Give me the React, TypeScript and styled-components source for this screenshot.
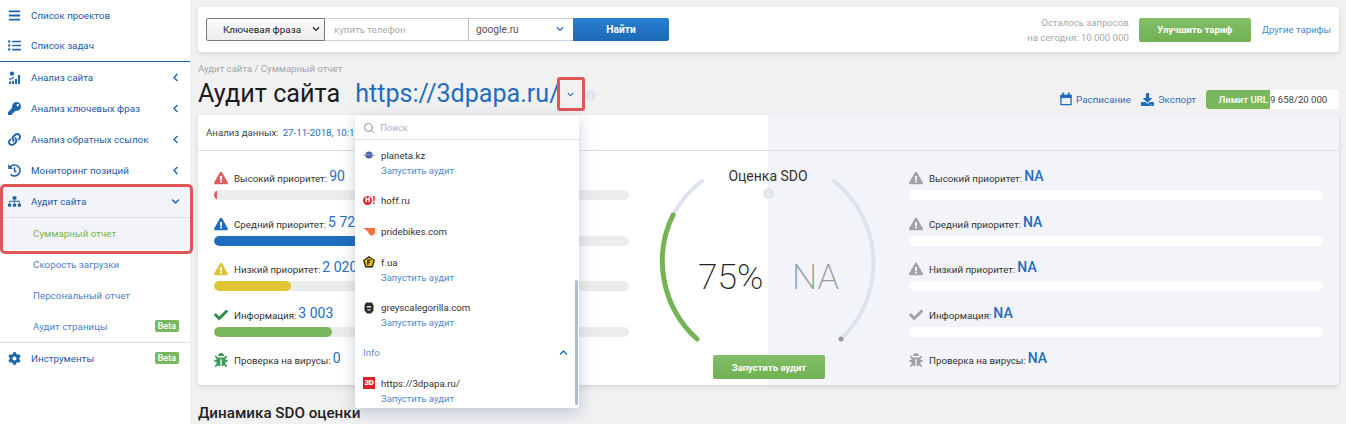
import React from "react";
import styled, { createGlobalStyle } from "styled-components";
import {
  FaBars, FaListUl, FaKey, FaLink, FaHistory, FaSitemap, FaCog, FaChevronLeft, FaChevronDown, FaChevronUp,
  FaExclamationTriangle, FaCheck, FaBug, FaDownload, FaInfoCircle,
} from "react-icons/fa";
import { Search } from "lucide-react";

const Global = createGlobalStyle`
  html, body { margin: 0; padding: 0; height: 424px; overflow: hidden; background: #f1f1f2; }
  body { font-family: Roboto, "Liberation Sans", sans-serif; }
  *, *::before, *::after { box-sizing: border-box; }
`;

const BLUE = "#1f6dbf";
const GREEN = "#79b75c";

const Page = styled.div`display: flex; width: 1346px; height: 424px; overflow: hidden;`;
const Sidebar = styled.nav`width: 190px; height: 424px; background: #fff; flex: none; position: relative; z-index: 2;`;
const TopGroup = styled.div`display: grid; grid-template-rows: 30.5px 30.5px; border-bottom: 1px solid #1f65ad;`;
const Row = styled.div<{ $active?: boolean; $sub?: boolean; $top?: boolean }>`
  height: ${(p) => (p.$top ? "30.5px" : "31px")};
  display: flex;
  align-items: center;
  padding: 0 11px 0 ${(p) => (p.$sub ? "33px" : "8px")};
  font-size: 9.8px;
  font-weight: 400;
  color: ${(p) => (p.$sub ? "#4d82c9" : "#245aa8")};
  background: ${(p) => (p.$active ? "#f2f4f9" : "#fff")};
`;
const RowIcon = styled.span`width: 23px; flex: none; display: flex; align-items: center; color: #1f65ad; font-size: 13px;`;
const RowLabel = styled.span<{ $green?: boolean }>`flex: 1; color: ${(p) => (p.$green ? "#75b552" : "inherit")};`;
const RowArrow = styled.span`display: flex; color: #1f65ad; font-size: 9px; margin-right: -1px;`;
const Beta = styled.span`background: ${GREEN}; color: #fff; font-size: 9px; font-weight: 500; border-radius: 2px; padding: 1px 3px; line-height: 10px;`;
const Divider = styled.div`height: 1px; background: #dddde8;`;
const ActiveGroup = styled.div`
  position: relative;
  &::after {
    content: "";
    position: absolute;
    left: 0; top: -2px; width: 193px; height: 70px;
    border: 3px solid #e05555;
    border-radius: 5px;
    pointer-events: none;
  }
`;

const Main = styled.main`flex: 1; min-width: 0; padding: 7px 7px 0 8px; position: relative;`;
const TopCard = styled.section`
  height: 45px; background: #fff; border-radius: 3px; box-shadow: 0 2px 5px rgba(0,0,0,.12);
  display: flex; align-items: center; padding: 0 8px;
`;
const SearchGroup = styled.div`display: flex; height: 23px; margin-top: -1px;`;
const KeySelect = styled.div`
  width: 119px; border: 1px solid #777; border-radius: 2px 0 0 2px;
  background: linear-gradient(#fbfbfb, #ececec);
  display: flex; align-items: center; justify-content: space-between; padding: 0 4px 0 16px;
  font-size: 9.9px; color: #222; svg { font-size: 8px; }
`;
const KeyInput = styled.div`
  width: 144px; border: 1px solid #ccd0d8; border-left: 0; border-right: 1px solid #b8bcc6;
  display: flex; align-items: center; padding-left: 9px; font-size: 9.7px; color: #aaa; background: #fff;
`;
const EngineSelect = styled.div`
  width: 104px; border-top: 1px solid #ccd0d8; border-bottom: 1px solid #ccd0d8;
  display: flex; align-items: center; justify-content: space-between; padding: 0 9px 0 7px;
  font-size: 10.2px; color: #555; background: #fff; svg { font-size: 8px; color: ${BLUE}; }
`;
const FindButton = styled.div`
  width: 96px; background: linear-gradient(#2a7fd0, #1a69b6); color: #fff; font-weight: 700;
  font-size: 10.2px; display: flex; align-items: center; justify-content: center; border-radius: 0 2px 2px 0;
`;
const Quota = styled.div`margin-left: auto; text-align: right; font-size: 9.6px; line-height: 15px; color: #a8a8a8;`;
const UpgradeButton = styled.div`
  width: 112px; height: 24px; margin: 0 11px 0 10px; border-radius: 2px; background: linear-gradient(#83bf68, #70b053);
  color: #fff; font-size: 9.6px; font-weight: 700; display: flex; align-items: center; justify-content: center;
`;
const PlansLink = styled.a`font-size: 9.6px; color: #4d8ad2;`;

const Crumb = styled.div`margin-top: 11px; height: 12px; line-height: 12px; font-size: 9.6px; color: #a5a5a5;`;
const TitleRow = styled.div`display: flex; align-items: center; height: 36px; margin-top: 1px; margin-bottom: 3px;`;
const Title = styled.h1`margin: 0; font-size: 25.2px; font-weight: 400; color: #1c1c1c; line-height: 36px;`;
const Url = styled.span`font-size: 25.1px; color: ${BLUE}; margin-left: 15px; line-height: 36px;`;
const ChevronBox = styled.span`
  width: 28px; height: 34px; flex: none; border: 3px solid #e05555; border-radius: 3px; margin-left: -3px;
  display: flex; align-items: center; justify-content: center; color: ${BLUE}; font-size: 7px;
`;
const InfoMark = styled.span`display: flex; color: #dfe3ee; font-size: 11px; margin-top: 3px;`;
const Actions = styled.div`margin-left: auto; display: flex; align-items: center; margin-top: 10px; font-size: 9.8px;`;
const ActionLink = styled.a`display: flex; align-items: center; gap: 4px; color: #2d6fbe; margin-right: 10px; svg { color: ${BLUE}; }`;
const LimitPill = styled.div`width: 133px; height: 19px; background: #fff; border-radius: 3px; display: flex; align-items: center; font-size: 9.6px; color: #444;`;
const LimitLabel = styled.span`width: 64px; height: 19px; background: ${GREEN}; color: #fff; border-radius: 3px 0 0 3px; display: flex; align-items: center; justify-content: flex-end; font-weight: 500; padding-right: 2px;`;

const Panel = styled.section`
  position: relative; height: 270px; border-radius: 3px; box-shadow: 0 2px 5px rgba(0,0,0,.12);
  background: linear-gradient(90deg, #fff 570px, #f2f4f9 570px);
`;
const PanelHead = styled.div`height: 36px; border-bottom: 1px solid #dfe1e8; display: flex; align-items: center; padding: 0 8px; font-size: 9.7px; color: #444; gap: 4px;`;
const DateText = styled.span`color: ${BLUE};`;
const PanelBody = styled.div`display: grid; grid-template-columns: 570px 571px;`;
const StatCol = styled.div<{ $right?: boolean }>`padding: 15px ${(p) => (p.$right ? "16px 0 141px" : "139px 0 16px")};`;
const StatRow = styled.div`height: 45.6px;`;
const StatLine = styled.div`height: 22px; margin-bottom: 2px; display: flex; align-items: center; font-size: 9.75px; color: #333;`;
const StatIcon = styled.span<{ $c: string }>`width: 20px; flex: none; display: flex; color: ${(p) => p.$c}; font-size: 14px; margin-top: 2px;`;
const StatLabel = styled.span`margin-top: 3px;`;
const StatValue = styled.span<{ $na?: boolean }>`font-size: 14px; color: ${BLUE}; margin-left: 2px; font-weight: ${(p) => (p.$na ? 500 : 400)}; margin-top: -2px;`;
const Track = styled.div<{ $right?: boolean }>`height: 10px; border-radius: 5px; background: ${(p) => (p.$right ? "#fff" : "#ececec")}; overflow: hidden;`;
const Fill = styled.div<{ $c: string }>`height: 100%; border-radius: 5px; background: ${(p) => p.$c};`;

const GaugeWrap = styled.div`position: absolute; left: 450px; top: 36px; width: 240px; height: 234px; display: flex; flex-direction: column; align-items: center;`;
const GaugeSvg = styled.svg`position: absolute; inset: 0;`;
const GaugeTitle = styled.div`margin-top: 17px; font-size: 14px; line-height: 16px; color: #333;`;
const GaugeInfo = styled.span`display: flex; color: #dfe3ee; font-size: 11px; margin-top: 4px;`;
const Scores = styled.div`position: absolute; top: 104px; left: 50px; display: flex; font-size: 35.5px; font-weight: 200; line-height: 44px;`;
const ScoreMain = styled.span`color: #222; width: 94px;`;
const ScoreNa = styled.span`color: #999;`;
const RunButton = styled.div`
  position: absolute; bottom: 6px; left: 65px; width: 112px; height: 24px; border-radius: 2px;
  background: linear-gradient(#83bf68, #70b053); color: #fff; font-weight: 700; font-size: 9.5px;
  display: flex; align-items: center; justify-content: center;
`;

const SectionTitle = styled.h2`margin: 18px 0 0; font-size: 15.2px; font-weight: 500; color: #222; line-height: 20px;`;

const Dropdown = styled.div`
  position: absolute; left: 165px; top: 116px; width: 224px; height: 292px; background: #fff; overflow: hidden;
  border-radius: 3px; box-shadow: 0 4px 16px rgba(60,80,130,.28); z-index: 3;
`;
const DropSearch = styled.div`height: 24px; border-bottom: 1px solid #dadde8; display: flex; align-items: center; gap: 5px; padding: 0 8px; font-size: 9.6px; color: #a9b2c8; svg { color: #8a8a8a; }`;
const DropItem = styled.div`padding: 7.8px 8px;`;
const DropName = styled.div`display: flex; align-items: center; gap: 6px; height: 15px; font-size: 9.7px; color: #333;`;
const DropLink = styled.a`display: block; margin-left: 18px; height: 15px; line-height: 15px; font-size: 9.5px; color: #4d8ad2;`;
const DropHead = styled.div`height: 30px; display: flex; align-items: center; justify-content: space-between; padding: 0 11px 0 8px; font-size: 9.7px; color: #5a93d6; svg { font-size: 9px; color: ${BLUE}; }`;
const Scrollbar = styled.div`position: absolute; right: 1px; top: 164px; width: 3px; height: 125px; background: #aebbd4; border-radius: 2px;`;
const Fav = styled.span<{ $bg?: string }>`
  width: 12px; height: 12px; flex: none; display: flex; align-items: center; justify-content: center;
  background: ${(p) => p.$bg ?? "transparent"};
  color: #fff; font-size: 8px; font-weight: 900; line-height: 1; letter-spacing: -.3px;
`;
const HoffDot = styled.span`width: 9px; height: 9px; border-radius: 50%; background: #e02a35; color: #fff; font-size: 7px; font-weight: 900; display: flex; align-items: center; justify-content: center; flex: none;`;
const HoffBang = styled.span`color: #e02a35; font-size: 10px; font-weight: 900; margin-left: .5px;`;

function SiteIcon() {
  return (
    <svg width="13" height="13" viewBox="0 0 13 13" fill="#1f65ad">
      <circle cx="4" cy="2.600" r="2.200" />
      <path d="M1 7.200c2 .6 3.400-.3 4.200-1.500l1 .6C5.600 7.700 4 8.900 1 8.800z" />
      <rect x="1" y="10.500" width="2" height="2.500" /><rect x="4" y="9.800" width="2" height="3.200" />
      <rect x="7" y="8" width="2" height="5" /><rect x="10" y="4" width="2" height="9" />
    </svg>
  );
}
const CalendarIcon = () => (
  <svg width="12" height="14" viewBox="0 0 13 14" fill="none">
    <path d="M1 3h11v10H1z" stroke={BLUE} strokeWidth="1.400" />
    <path d="M.5 2.500h12V6H.5z" fill={BLUE} />
    <rect x="2.500" y="0" width="2" height="3" fill={BLUE} /><rect x="8.500" y="0" width="2" height="3" fill={BLUE} />
  </svg>
);

const Planet = () => (
  <svg width="12" height="12" viewBox="0 0 12 12"><path d="M0 6.300h12" stroke="#aab8d8" strokeWidth="1" /><circle cx="6" cy="6" r="3.600" fill="#4a62a8" /><path d="M2.600 5.600h6.800" stroke="#8fa3d4" strokeWidth=".8" /></svg>
);
const Pride = () => (
  <svg width="12" height="12" viewBox="0 0 12 12"><path d="M0 3h12v3.500c0 2.600-1.600 4-3.800 4-1 0-1.600-1-2.600-2.600C4.500 6 2.600 4.600 0 3z" fill="#f4733a" /></svg>
);
const Fua = () => (
  <svg width="12" height="12" viewBox="0 0 12 12"><path d="M6 0l6 4.200-2.200 7.300H2.200L0 4.200z" fill="#2b2612" /><path d="M6 1.500l4.500 3.100-1.700 5.500H3.200L1.500 4.600z" fill="#e9bd1e" /><path d="M4.800 9V4.200h2.800M4.800 6.300h2.200" stroke="#2b2612" strokeWidth="1.200" fill="none" /></svg>
);
const Gorilla = () => (
  <svg width="12" height="12" viewBox="0 0 12 12"><path d="M3 .5h6l1.500 3v5L8 11.500H4L1.500 8.500v-5z" fill="#2b2b2b" /><rect x="3.800" y="4" width="4.400" height="1.500" fill="#ddd" /><rect x="4.500" y="7" width="3" height="2" fill="#999" /></svg>
);

const stats = [
  { label: "Высокий приоритет:", value: "90", icon: <FaExclamationTriangle />, c: "#de5f5f", w: 0.8 },
  { label: "Средний приоритет:", value: "5 722", icon: <FaExclamationTriangle />, c: BLUE, w: 52 },
  { label: "Низкий приоритет:", value: "2 020", icon: <FaExclamationTriangle />, c: "#dfc433", w: 18.6 },
  { label: "Информация:", value: "3 003", icon: <FaCheck />, c: "#2f8a46", fill: GREEN, w: 28.4 },
  { label: "Проверка на вирусы:", value: "0", icon: <FaBug />, c: "#3b9a57" },
];

export default function App() {
  return (
    <Page>
      <Global />
      <Sidebar>
        <TopGroup>
          <Row $top><RowIcon><FaBars /></RowIcon><RowLabel>Список проектов</RowLabel></Row>
          <Row $top><RowIcon><FaListUl /></RowIcon><RowLabel>Список задач</RowLabel></Row>
        </TopGroup>
        <Row><RowIcon><SiteIcon /></RowIcon><RowLabel>Анализ сайта</RowLabel><RowArrow><FaChevronLeft /></RowArrow></Row>
        <Row><RowIcon><FaKey /></RowIcon><RowLabel>Анализ ключевых фраз</RowLabel><RowArrow><FaChevronLeft /></RowArrow></Row>
        <Row><RowIcon><FaLink /></RowIcon><RowLabel>Анализ обратных ссылок</RowLabel><RowArrow><FaChevronLeft /></RowArrow></Row>
        <Row><RowIcon><FaHistory /></RowIcon><RowLabel>Мониторинг позиций</RowLabel><RowArrow><FaChevronLeft /></RowArrow></Row>
        <ActiveGroup>
          <Row $active><RowIcon><FaSitemap /></RowIcon><RowLabel>Аудит сайта</RowLabel><RowArrow><FaChevronDown /></RowArrow></Row>
          <Divider />
          <Row $active $sub><RowLabel $green>Суммарный отчет</RowLabel></Row>
        </ActiveGroup>
        <Row $sub><RowLabel>Скорость загрузки</RowLabel></Row>
        <Row $sub><RowLabel>Персональный отчет</RowLabel></Row>
        <Row $sub $top><RowLabel>Аудит страницы</RowLabel><Beta>Beta</Beta></Row>
        <Divider />
        <Row><RowIcon><FaCog /></RowIcon><RowLabel>Инструменты</RowLabel><Beta>Beta</Beta></Row>
      </Sidebar>

      <Main>
        <TopCard>
          <SearchGroup>
            <KeySelect>Ключевая фраза <FaChevronDown /></KeySelect>
            <KeyInput>купить телефон</KeyInput>
            <EngineSelect>google.ru <FaChevronDown /></EngineSelect>
            <FindButton>Найти</FindButton>
          </SearchGroup>
          <Quota>Осталось запросов<br />на сегодня: 10 000 000</Quota>
          <UpgradeButton>Улучшить тариф</UpgradeButton>
          <PlansLink>Другие тарифы</PlansLink>
        </TopCard>

        <Crumb>Аудит сайта / Суммарный отчет</Crumb>
        <TitleRow>
          <Title>Аудит сайта</Title>
          <Url>https://3dpapa.ru/</Url>
          <ChevronBox><FaChevronDown /></ChevronBox>
          <InfoMark><FaInfoCircle /></InfoMark>
          <Actions>
            <ActionLink><CalendarIcon /> Расписание</ActionLink>
            <ActionLink><FaDownload size={13} /> Экспорт</ActionLink>
            <LimitPill><LimitLabel>Лимит URL</LimitLabel>9 658/20 000</LimitPill>
          </Actions>
        </TitleRow>

        <Panel>
          <PanelHead>Анализ данных: <DateText>27-11-2018, 10:15</DateText></PanelHead>
          <PanelBody>
            <StatCol>
              {stats.map((s) => (
                <StatRow key={s.label}>
                  <StatLine>
                    <StatIcon $c={s.c}>{s.icon}</StatIcon>
                    <StatLabel>{s.label}</StatLabel>
                    <StatValue>{s.value}</StatValue>
                  </StatLine>
                  {s.w !== undefined && (
                    <Track><Fill $c={s.fill ?? s.c} style={{ width: `${s.w}%` }} /></Track>
                  )}
                </StatRow>
              ))}
            </StatCol>
            <StatCol $right>
              {stats.map((s) => (
                <StatRow key={s.label}>
                  <StatLine>
                    <StatIcon $c="#a2a2a2">{s.icon}</StatIcon>
                    <StatLabel>{s.label}</StatLabel>
                    <StatValue $na>NA</StatValue>
                  </StatLine>
                  {s.w !== undefined && <Track $right />}
                </StatRow>
              ))}
            </StatCol>
          </PanelBody>
          <GaugeWrap>
            <GaugeSvg width="240" height="234" viewBox="0 0 240 234" fill="none">
              <path d="M54 30A105 105 0 0 0 25 64" stroke="#dde3ee" strokeWidth="4" strokeLinecap="round" />
              <path d="M25 64A105 105 0 0 0 49 188" stroke="#76b356" strokeWidth="5" strokeLinecap="round" />
              <path d="M186 30A105 105 0 0 1 193 188" stroke="#dde3ee" strokeWidth="4" strokeLinecap="round" />
              <circle cx="193" cy="188" r="2.500" fill="#999" />
            </GaugeSvg>
            <GaugeTitle>Оценка SDO</GaugeTitle>
            <GaugeInfo><FaInfoCircle /></GaugeInfo>
            <Scores><ScoreMain>75%</ScoreMain><ScoreNa>NA</ScoreNa></Scores>
            <RunButton>Запустить аудит</RunButton>
          </GaugeWrap>
        </Panel>

        <SectionTitle>Динамика SDO оценки</SectionTitle>

        <Dropdown>
          <DropSearch><Search size={12} /> Поиск</DropSearch>
          <DropItem><DropName><Fav><Planet /></Fav>planeta.kz</DropName><DropLink>Запустить аудит</DropLink></DropItem>
          <DropItem><DropName><Fav><HoffDot>H</HoffDot><HoffBang>!</HoffBang></Fav>hoff.ru</DropName></DropItem>
          <DropItem><DropName><Fav><Pride /></Fav>pridebikes.com</DropName></DropItem>
          <DropItem><DropName><Fav><Fua /></Fav>f.ua</DropName><DropLink>Запустить аудит</DropLink></DropItem>
          <DropItem><DropName><Fav><Gorilla /></Fav>greyscalegorilla.com</DropName><DropLink>Запустить аудит</DropLink></DropItem>
          <DropHead>Info <FaChevronUp /></DropHead>
          <DropItem><DropName><Fav $bg="#e0202c">3D</Fav>https://3dpapa.ru/</DropName><DropLink>Запустить аудит</DropLink></DropItem>
          <Scrollbar />
        </Dropdown>
      </Main>
    </Page>
  );
}
